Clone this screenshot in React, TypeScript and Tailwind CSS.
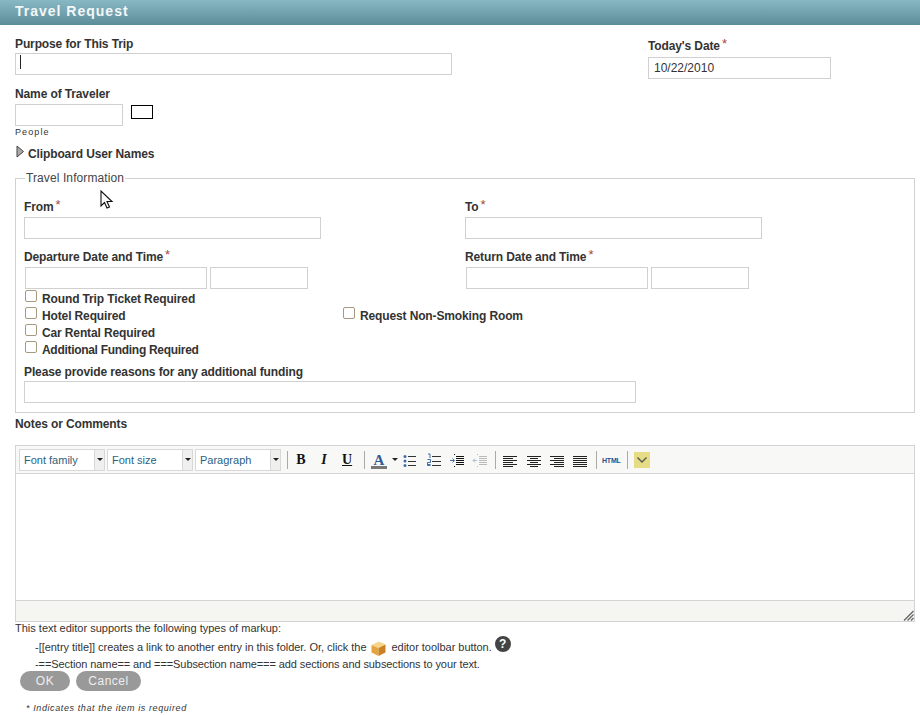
import React from "react";

const Req = () => <span className="relative top-[-2px] ml-[2px] text-[13px] font-normal text-[#a5483c]">*</span>;

function Label({ children, className = "" }: { children: React.ReactNode; className?: string }) {
  return <div className={`text-[12px] leading-[14px] font-bold tracking-[-0.12px] text-[#333] ${className}`}>{children}</div>;
}

function Field({ w, className = "", value }: { w: string; className?: string; value?: string }) {
  return (
    <input
      readOnly
      defaultValue={value}
      className={`${w} h-[22px] border border-[#d0d0d0] bg-white px-[5px] text-[12px] text-[#333] outline-none ${className}`}
    />
  );
}

function Check({ label, className = "tracking-[-0.13px]" }: { label: string; className?: string }) {
  return (
    <div className="flex h-[17px] items-center">
      <span className="relative top-[-3px] h-[12px] w-[12px] rounded-[2px] border border-[#a59a80] bg-white" />
      <span className={`ml-[5px] text-[12px] font-bold text-[#333] ${className}`}>{label}</span>
    </div>
  );
}

function Combo({ label, w }: { label: string; w: string }) {
  return (
    <div className={`${w} flex h-[22px] border border-[#d8d8d8] bg-white`}>
      <span className="flex-1 pl-[4px] text-[11px] leading-[20px] text-[#2c5f80]">{label}</span>
      <span className="flex w-[10px] items-center justify-center border-l border-[#d8d8d8] bg-[#efefef]">
        <span className="h-0 w-0 border-x-[3px] border-t-[3px] border-x-transparent border-t-[#222]" />
      </span>
    </div>
  );
}

const Sep = ({ className = "" }: { className?: string }) => <span className={`h-[18px] w-px bg-[#aaa] ${className}`} />;

function Ico({ children, className = "" }: { children: React.ReactNode; className?: string }) {
  return (
    <svg width="16" height="16" viewBox="0 0 16 16" className={`relative top-px shrink-0 ${className}`}>
      {children}
    </svg>
  );
}

const Lines = ({ rows, color = "#222" }: { rows: [number, number, number][]; color?: string }) => (
  <>
    {rows.map(([x1, x2, y], i) => (
      <line key={i} x1={x1} x2={x2} y1={y + 0.5} y2={y + 0.5} stroke={color} strokeWidth="1" />
    ))}
  </>
);

const Align = ({ type }: { type: "l" | "c" | "r" | "j" }) => {
  const long: [number, number] = [1, 15];
  const short: [number, number] =
    type === "l" ? [1, 11] : type === "c" ? [4, 12] : type === "r" ? [5, 15] : [1, 15];
  const ys = [3, 5, 7, 9, 11, 13];
  return (
    <Ico>
      <Lines rows={ys.map((y, i) => (i % 2 === 0 ? [long[0], long[1], y] : [short[0], short[1], y]) as [number, number, number])} />
    </Ico>
  );
};

const Dots = ({ fill }: { fill: string }) => (
  <>
    <circle cx="3" cy="3.5" r="1.5" fill={fill} />
    <circle cx="3" cy="8" r="1.5" fill={fill} />
    <circle cx="3" cy="12.5" r="1.5" fill={fill} />
  </>
);

export default function App() {
  return (
    <div className="relative h-[715px] w-[920px] overflow-hidden bg-white font-['Liberation_Sans',Arial,sans-serif] text-[#333]">
      <div className="flex h-[25px] items-center bg-gradient-to-b from-[#89b8c5] to-[#5e8d9a] pb-[3px] pl-[15px] text-[14px] font-bold tracking-[1px] text-[#f2f7f8]">
        Travel Request
      </div>

      <div className="flex px-[15px]">
        <div className="w-[633px]">
          <Label className="mt-[12px]">Purpose for This Trip</Label>
          <div className="relative h-[22px] w-[437px]">
            <Field w="w-[437px]" />
            <span className="absolute left-[5px] top-[4px] h-[14px] w-px bg-[#222]" />
          </div>
          <Label className="mt-[14px]">Name of Traveler</Label>
          <div className="mt-[3px] flex items-start">
            <Field w="w-[108px]" />
            <span className="ml-[8px] mt-px h-[14px] w-[22px] border border-black bg-white" />
          </div>
          <div className="text-[9px] leading-[12px] tracking-[1.1px] text-[#333]">People</div>
          <div className="mt-[9px] flex h-[14px] items-center">
            <svg width="9" height="14" viewBox="0 0 9 14" className="relative top-[-2px] ml-px shrink-0">
              <path d="M1 1 L7.5 6.5 L1 12 Z" fill="#aaa" stroke="#444" strokeWidth="1" />
            </svg>
            <Label className="ml-[3px]">Clipboard User Names</Label>
          </div>
        </div>
        <div>
          <Label className="mt-[14px]">
            Today's Date<Req />
          </Label>
          <Field w="w-[183px]" value="10/22/2010" className="mt-[4px] border-[#aaa]" />
        </div>
      </div>

      <fieldset className="ml-[15px] mt-[10px] h-[242px] w-[900px] border border-[#d0d0d0] px-[8px]">
        <legend className="ml-[1px] px-[1px] text-[12px] leading-[14px] tracking-[0.1px] text-[#444]">Travel Information</legend>
        <div className="grid grid-cols-[441px_1fr]">
          <div>
            <Label className="mt-[15px]">
              From<Req />
            </Label>
            <Field w="w-[297px]" className="mt-[3px] block" />
          </div>
          <div>
            <Label className="mt-[15px]">
              To<Req />
            </Label>
            <Field w="w-[297px]" className="mt-[3px] block" />
          </div>
          <div>
            <Label className="mt-[11px]">
              Departure Date and Time<Req />
            </Label>
            <div className="mt-[3px] flex gap-[3px] pl-px">
              <Field w="w-[182px]" />
              <Field w="w-[98px]" />
            </div>
          </div>
          <div>
            <Label className="mt-[11px]">
              Return Date and Time<Req />
            </Label>
            <div className="mt-[3px] flex gap-[3px] pl-px">
              <Field w="w-[182px]" />
              <Field w="w-[98px]" />
            </div>
          </div>
        </div>
        <div className="mt-[1px] grid grid-cols-[318px_1fr] pl-px">
          <Check label="Round Trip Ticket Required" />
          <div />
          <Check label="Hotel Required" />
          <Check label="Request Non-Smoking Room" />
          <Check label="Car Rental Required" />
          <div />
          <Check label="Additional Funding Required" className="tracking-[-0.3px]" />
        </div>
        <Label className="mt-[7px]">Please provide reasons for any additional funding</Label>
        <Field w="w-[612px]" className="mt-[2px] block" />
      </fieldset>

      <Label className="ml-[15px] mt-[4px]">Notes or Comments</Label>

      <div className="ml-[15px] mt-[14px] w-[900px] border border-[#d4d4d4] bg-white">
        <div className="flex h-[28px] items-center border-b border-[#d4d4d4] bg-[#f8f8f6] pl-[3px]">
          <div className="flex gap-[2px]">
            <Combo label="Font family" w="w-[86px]" />
            <Combo label="Font size" w="w-[86px]" />
            <Combo label="Paragraph" w="w-[86px]" />
          </div>
          <Sep className="ml-[6px]" />
          <span className="ml-[8px] w-[10px] text-center font-['Liberation_Serif',serif] text-[14px] font-bold text-[#111]">B</span>
          <span className="ml-[13px] w-[10px] text-center font-['Liberation_Serif',serif] text-[14px] font-bold italic text-[#111]">I</span>
          <span className="ml-[13px] w-[10px] text-center font-['Liberation_Serif',serif] text-[14px] font-bold text-[#111] underline">U</span>
          <Sep className="ml-[12px]" />
          <svg width="16" height="18" viewBox="0 0 16 18" className="relative top-px ml-[6px] shrink-0">
            <text x="8" y="12.5" textAnchor="middle" fontFamily="Liberation Serif" fontWeight="bold" fontSize="15" fill="#2f5a9a">A</text>
            <rect x="0" y="14" width="16" height="3" fill="#777" />
          </svg>
          <span className="ml-[5px] h-0 w-0 border-x-[3px] border-t-[3px] border-x-transparent border-t-[#222]" />
          <Ico className="ml-[4px]">
            <Dots fill="#3f6ea8" />
            <Lines rows={[[6, 14, 3], [6, 14, 8], [6, 14, 12]]} color="#333" />
          </Ico>
          <Ico className="ml-[8px]">
            <path d="M2 1h2v4M1.5 6.5h3v3h-3v3h3M1.5 11.5h3" fill="none" stroke="#3f6ea8" strokeWidth="1" />
            <Lines rows={[[6, 15, 3], [6, 15, 8], [6, 15, 12]]} color="#333" />
          </Ico>
          <Ico className="ml-[7px]">
            <path d="M1 7.5h4M3.5 5.5l2 2-2 2" fill="none" stroke="#3f6ea8" strokeWidth="1" />
            <Lines rows={[[5, 6, 1], [7, 15, 3], [7, 15, 5], [7, 15, 7], [7, 15, 9], [7, 15, 11], [5, 6, 13]]} color="#111" />
          </Ico>
          <Ico className="ml-[7px]">
            <path d="M1 7.5h4M3 5.5l-2 2 2 2" fill="none" stroke="#aebfd4" strokeWidth="1" />
            <Lines rows={[[5, 6, 1], [7, 15, 3], [7, 15, 5], [7, 15, 7], [7, 15, 9], [7, 15, 11], [5, 6, 13]]} color="#bbb" />
          </Ico>
          <Sep className="ml-[7px]" />
          <span className="ml-[6px]"><Align type="l" /></span>
          <span className="ml-[8px]"><Align type="c" /></span>
          <span className="ml-[7px]"><Align type="r" /></span>
          <span className="ml-[7px]"><Align type="j" /></span>
          <Sep className="ml-[8px]" />
          <span className="relative top-[2px] ml-[5px] w-[18px] text-center text-[7px] font-bold tracking-[-0.2px] text-[#2f4f86]">HTML</span>
          <Sep className="ml-[7px]" />
          <span className="ml-[6px] flex h-[16px] w-[16px] items-center justify-center bg-[#e6dc86]">
            <svg width="12" height="8" viewBox="0 0 12 8">
              <path d="M1.5 1.5 L6 6 L10.5 1.5" fill="none" stroke="#555" strokeWidth="1.4" />
            </svg>
          </span>
        </div>
        <div className="h-[126px] bg-white" />
        <div className="relative h-[21px] border-t border-[#d4d4d4] bg-[#f5f5f2]">
          <svg width="11" height="11" viewBox="0 0 11 11" className="absolute bottom-0 right-0">
            <path d="M10.5 1 L1 10.5 M10.5 4.5 L4.5 10.5 M10.5 8 L8 10.5" stroke="#666" strokeWidth="1.3" />
          </svg>
        </div>
      </div>

      <div className="ml-[15px] text-[11px] leading-[13px] text-[#333]">This text editor supports the following types of markup:</div>
      <div className="ml-[35px] mt-[2px] flex h-[20px] items-center text-[11px] tracking-[-0.03px] text-[#333]">
        <span>-[[entry title]] creates a link to another entry in this folder. Or, click the</span>
        <svg width="17" height="17" viewBox="0 0 17 17" className="relative top-[1px] mx-[4px] shrink-0">
          <path d="M1.5 5 L9 1.5 L15.5 4.5 L8.5 8 Z" fill="#f6d58a" />
          <path d="M1.5 5 L8.5 8 V16 L1.5 12.5 Z" fill="#e6a53c" />
          <path d="M8.5 8 L15.5 4.5 V12.5 L8.5 16 Z" fill="#c98324" />
        </svg>
        <span>editor toolbar button.</span>
        <span className="relative top-[-3px] ml-[3px] flex h-[16px] w-[16px] items-center justify-center rounded-full bg-[#444] text-[12px] font-bold text-white">?</span>
      </div>
      <div className="ml-[35px] mt-px text-[11px] leading-[13px] tracking-[-0.09px] text-[#333]">-==Section name== and ===Subsection name=== add sections and subsections to your text.</div>
      <div className="ml-[20px] flex gap-[6px]">
        <button className="h-[20px] w-[50px] rounded-full bg-[#999] text-[12px] tracking-[0.5px] text-[#eee]">OK</button>
        <button className="h-[20px] w-[65px] rounded-full bg-[#999] text-[12px] tracking-[0.5px] text-[#eee]">Cancel</button>
      </div>
      <div className="ml-[26px] mt-[11px] text-[9px] italic leading-[12px] tracking-[0.6px] text-[#333]">* Indicates that the item is required</div>

      <svg width="14" height="20" viewBox="0 0 14 20" className="absolute left-[100px] top-[190px]">
        <path d="M1 1 V16 L4.5 12.5 L7 18 L9.5 17 L7 11.5 L12 11.5 Z" fill="white" stroke="#111" strokeWidth="1.1" />
      </svg>
    </div>
  );
}
